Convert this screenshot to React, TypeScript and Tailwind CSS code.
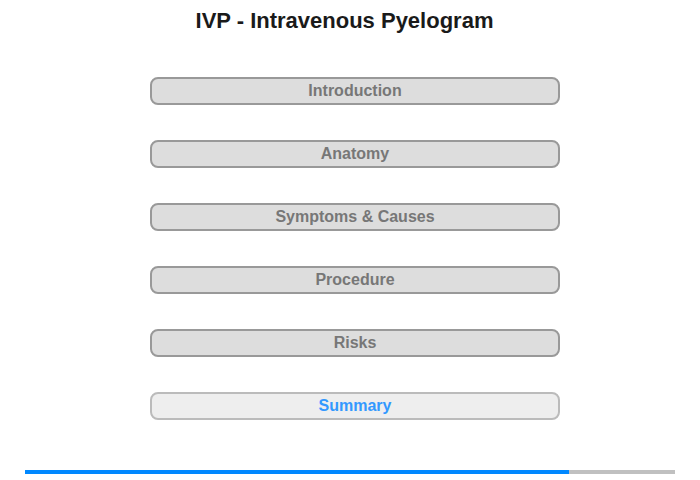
import React from "react";

const items = ["Introduction", "Anatomy", "Symptoms & Causes", "Procedure", "Risks", "Summary"];

export default function App() {
  return (
    <div className="w-[700px] h-[480px] bg-white relative" style={{ fontFamily: '"Liberation Sans", Arial, sans-serif' }}>
      <div className="pt-[8px] h-[77px] text-center">
        <h1 className="text-[22px] leading-[26px] font-bold text-[#1a1a1a] ml-[-11px]">IVP - Intravenous Pyelogram</h1>
      </div>
      <div className="flex flex-col gap-[35px] ml-[150px] w-[410px]">
        {items.map((t) => {
          const active = t === "Summary";
          return (
            <div
              key={t}
              className={
                active
                  ? "h-[28px] rounded-[8px] border-2 border-[#bbbbbb] bg-[#eeeeee] flex items-center justify-center text-[16px] font-bold text-[#3399ff]"
                  : "h-[28px] rounded-[8px] border-2 border-[#999999] bg-[#dddddd] flex items-center justify-center text-[16px] font-bold text-[#777777]"
              }
            >
              {t}
            </div>
          );
        })}
      </div>
      <div className="mt-[50px] ml-[25px] w-[650px] h-[4px] bg-[#c0c0c0] flex">
        <div className="h-full bg-[#0088ff]" style={{ width: "544px" }} />
      </div>
    </div>
  );
}
